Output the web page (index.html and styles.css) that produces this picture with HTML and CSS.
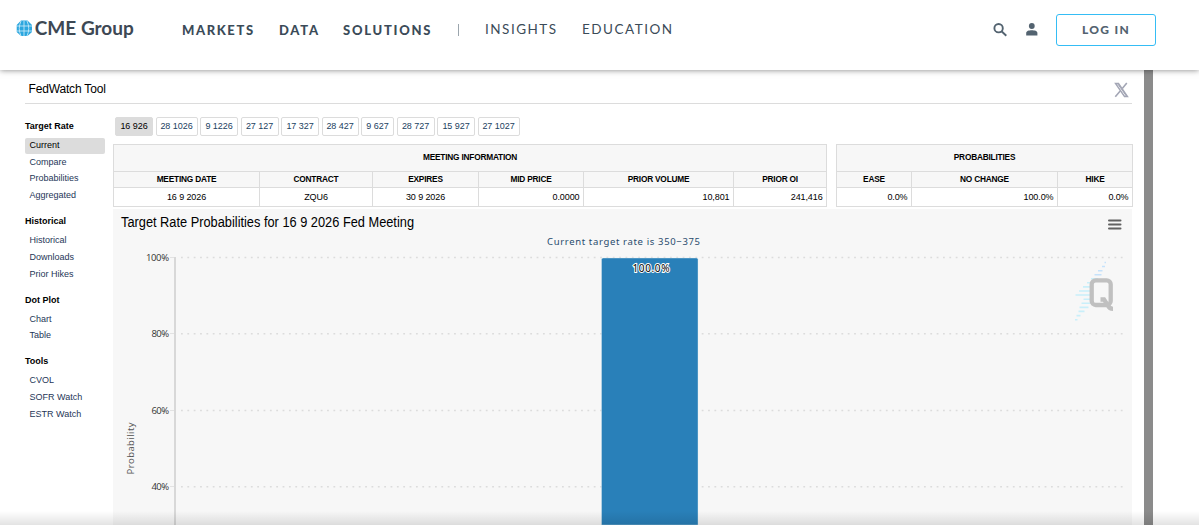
FILE: index.html
```html
<!DOCTYPE html>
<html lang="en">
<head>
<meta charset="utf-8">
<title>FedWatch Tool - CME Group</title>
<link rel="stylesheet" href="styles.css">
</head>
<body>
<div class="page">
<header class="header">
  <a class="logo" aria-label="CME Group">
    <svg width="126" height="40" viewBox="0 -8 126 40">
      <path fill="#2ca7df" d="M5 .5h6.500L16 5v7l-4.500 4H5L.7 12V5z"/>
      <g fill="none" stroke="#d4effa" stroke-width=".8"><path d="M8 1v15M0 6h16M0 11h16M5 1Q1.500 8.500 5 16M11 1q3.500 7.500 0 15"/></g>
      <text class="logo-text" x="18.800" y="15" textLength="99" lengthAdjust="spacingAndGlyphs">CME Group</text>
    </svg>
  </a>
  <nav class="nav">
    <a class="nav-main markets">MARKETS</a>
    <a class="nav-main data">DATA</a>
    <a class="nav-main solutions">SOLUTIONS</a>
    <span class="nav-divider"></span>
    <a class="nav-sub insights">INSIGHTS</a>
    <a class="nav-sub">EDUCATION</a>
  </nav>
  <div class="actions">
    <svg class="search" width="14" height="14" viewBox="0 0 14 14" fill="none" stroke="#536370" stroke-width="1.900"><circle cx="5.600" cy="5.200" r="4.200"/><path d="M8.500 8.200 13.300 12.800"/></svg>
    <svg class="user" width="12" height="13" viewBox="0 0 12 13" fill="#536370"><circle cx="5.800" cy="3" r="2.900"/><path d="M.2 12.500V10C.2 8 3 7.300 5.800 7.300S11.400 8 11.400 10v2.500z"/></svg>
    <a class="login">LOG IN</a>
  </div>
</header>
<div class="viewport">
  <main class="tool">
    <div class="tool-head">
      <h1>FedWatch Tool</h1>
      <svg width="15" height="16" viewBox="0 0 15 16" fill="none" stroke="#a3a6b5"><path stroke-width="1.400" d="M1.500 1.500h3l9 13h-3z"/><path stroke-width="1" d="m3.800 2 8.500 12"/><path stroke-width="1.600" d="M12.800 1 8.300 6.500M6.200 9 1.300 14.800"/></svg>
    </div>
    <div class="columns">
      <aside class="sidebar">
        <h2>Target Rate</h2>
        <a class="active">Current</a><a>Compare</a><a>Probabilities</a><a>Aggregated</a>
        <h2>Historical</h2>
        <a>Historical</a><a>Downloads</a><a>Prior Hikes</a>
        <h2 class="tight">Dot Plot</h2>
        <a>Chart</a><a>Table</a>
        <h2 class="tight">Tools</h2>
        <a>CVOL</a><a>SOFR Watch</a><a>ESTR Watch</a>
      </aside>
      <section class="content">
        <div class="tabs">
          <a class="selected">16 926</a><a class="wide">28 1026</a><a>9 1226</a><a>27 127</a><a>17 327</a><a class="mid">28 427</a><a class="short">9 627</a><a>28 727</a><a>15 927</a><a class="wide">27 1027</a>
        </div>
        <div class="tables">
          <table class="meeting">
            <colgroup><col class="c146"><col class="c113"><col class="c106"><col class="c105"><col class="c150"><col class="c93"></colgroup>
            <tr class="caption"><th colspan="6">MEETING INFORMATION</th></tr>
            <tr class="labels"><th>MEETING DATE</th><th>CONTRACT</th><th>EXPIRES</th><th>MID PRICE</th><th>PRIOR VOLUME</th><th>PRIOR OI</th></tr>
            <tr class="values"><td class="center">16 9 2026</td><td class="center">ZQU6</td><td class="center">30 9 2026</td><td>0.0000</td><td>10,801</td><td>241,416</td></tr>
          </table>
          <table class="probabilities">
            <colgroup><col class="c75"><col class="c146"><col class="c75"></colgroup>
            <tr class="caption"><th colspan="3">PROBABILITIES</th></tr>
            <tr class="labels"><th>EASE</th><th>NO CHANGE</th><th>HIKE</th></tr>
            <tr class="values"><td>0.0%</td><td>100.0%</td><td>0.0%</td></tr>
          </table>
        </div>
        <svg class="chart" width="1019" height="316" viewBox="113 209 1019 316">
          <rect x="113" y="209" width="1019" height="316" fill="#f7f7f7"/>
          <text class="chart-title" x="121" y="227" textLength="293" lengthAdjust="spacingAndGlyphs">Target Rate Probabilities for 16 9 2026 Fed Meeting</text>
          <text class="chart-subtitle" x="547" y="245" textLength="153">Current target rate is 350−375</text>
          <path stroke="#616161" stroke-width="2" stroke-linecap="round" d="M1109 220.500h11.500M1109 224.500h11.500M1109 228.500h11.500"/>
          <g stroke="#dcdcdc" stroke-width="1.500" stroke-dasharray="1.800 4.550">
            <path d="M181 257.500h944M181 333.700h944M181 410.400h944M181 486.700h944"/>
          </g>
          <path stroke="#e2e2e2" d="M170 257.500h5M170 333.500h5M170 410.500h5M170 486.500h5"/>
          <path stroke="#d8d8d8" stroke-width="2" d="M175 257v268"/>
          <g class="axis-label">
            <text x="146" y="261" textLength="23">100%</text>
            <text x="151.500" y="337" textLength="17.500">80%</text>
            <text x="151.500" y="414" textLength="17.500">60%</text>
            <text x="151.500" y="490" textLength="17.500">40%</text>
          </g>
          <text class="axis-title" transform="translate(134 474.500) rotate(-90)" textLength="52">Probability</text>
          <path fill="#2980b9" stroke="#e5eff6" stroke-width=".4" d="M601.500 525V259.500q0-1.500 1.500-1.500h93.500q1.500 0 1.500 1.500V525z"/>
          <text class="bar-label" x="632.500" y="272" textLength="37">100.0%</text>
          <g stroke="#c9effa" stroke-width="1.600">
            <path stroke="#c5e2fb" d="M1104.500 262.500h1.500M1102 266.500h3M1098 270.700h4.500M1094.500 274.800h7"/>
            <path d="M1091 278.800h7M1087 282.800h5M1083 286.900h8M1079 291h12M1075.500 295h15M1083.500 299.200h7M1081.500 303.200h9M1079.500 307.400h9M1078.500 311.400h6M1076.500 315.600h4M1075 319.700h2.500"/>
          </g>
          <g fill="none" stroke="#c0c0c0" stroke-width="4.300"><rect x="1091.700" y="280.300" width="19" height="24.700" rx="4"/><path d="M1100.500 299.500h3.500l4 6q1.500 3.300 5 3.300"/></g>
        </svg>
      </section>
    </div>
  </main>
  <div class="scrollbar"></div>
</div>
<div class="fade"></div>
</div>
</body>
</html>
```
FILE: styles.css
```css
* { box-sizing: border-box; }
html { overflow: hidden; }
body { margin: 0; background: #fff; font-family: "Liberation Sans", Arial, sans-serif; }
.page { position: relative; height: 525px; overflow: hidden; }

.header { position: relative; z-index: 2; height: 70px; display: flex; align-items: flex-start; padding-left: 16px; background: #fff; box-shadow: 0 0 6px rgba(0, 0, 0, .5); font-family: Lato, sans-serif; color: #3b4b58; }
.logo { height: 40px; width: 126px; margin-top: 12px; }
.logo-text { font: 700 18.500px Lato, sans-serif; fill: #3d4854; }
.nav { display: flex; margin: 20px 0 0 40px; height: 20px; line-height: 20px; white-space: nowrap; }
.nav-main { font-weight: 900; font-size: 13px; letter-spacing: 1.750px; }
.nav-sub { font-size: 13.500px; letter-spacing: 1.500px; line-height: 18px; }
.markets { width: 97px; letter-spacing: 1.600px; }
.data { width: 64px; }
.solutions { width: 115px; }
.nav-divider { width: 1px; height: 12px; margin: 4px 26px 0 0; background: #9ba5ad; }
.insights { width: 97px; }
.actions { display: flex; margin: 14px 43px 0 auto; }
.search { margin: 9px 19px 0 0; }
.user { margin: 9px 18px 0 0; }
.login { width: 100px; height: 32px; border: 1px solid #35bdf5; border-radius: 3px; text-align: center; font-size: 12px; font-weight: 900; line-height: 29px; letter-spacing: 1.300px; color: #536370; }

.viewport { display: flex; height: 455px; }
.tool { width: 1107px; margin-left: 25px; }
.scrollbar { width: 9px; margin-left: 12px; background: #8b8b8b; }
.tool-head { display: flex; justify-content: space-between; height: 34px; padding: 12px 3px 0 3.500px; border-bottom: 1px solid #dcdcdc; }
.tool-head h1 { margin: 0; font-size: 12px; font-weight: 400; line-height: 14px; letter-spacing: -.17px; }
.columns { display: flex; }

.sidebar { display: flex; flex: none; flex-direction: column; width: 80px; margin-right: 8px; padding-top: 17px; font-size: 9px; }
.sidebar h2 { height: 17.600px; margin: 10.500px 0 0; font-size: 9px; line-height: 11px; }
.sidebar h2:first-child { height: 17px; margin-top: 0; }
.sidebar .tight { height: 17px; }
.sidebar a { height: 16.900px; padding-left: 4.500px; line-height: 15px; color: #253657; }
.sidebar .active { height: 16px; margin-bottom: .6px; border-radius: 2px; background: #dcdcdc; color: #000; line-height: 14px; }

.content { flex: none; width: 1019px; }
.tabs { display: flex; gap: 2.500px; padding: 13px 0 0 2px; height: 40px; font-size: 9px; }
.tabs a { width: 38px; height: 19px; border: 1px solid #dcdcdc; border-radius: 2px; line-height: 16px; text-align: center; white-space: nowrap; color: #1a4161; letter-spacing: -.05px; }
.tabs .selected { background: #dcdcdc; color: #000; }
.tabs .wide { width: 42px; }
.tabs .mid { width: 37px; }
.tabs .short { width: 33px; }
.tables { display: flex; justify-content: space-between; width: 1020px; height: 65px; }
table { border-collapse: collapse; table-layout: fixed; height: 63px; }
.meeting { width: 714px; }
.probabilities { width: 297px; }
.c146 { width: 146px; } .c113 { width: 113px; } .c106 { width: 106px; } .c105 { width: 105px; } .c150 { width: 150px; } .c93 { width: 93px; } .c75 { width: 75px; }
th, td { padding: 0; border: 1px solid #dcdcdc; }
th { background: #f7f7f7; font-size: 8.300px; letter-spacing: -.2px; }
td { padding-right: 3.500px; text-align: right; font-size: 9px; letter-spacing: -.1px; }
td.center { text-align: center; padding: 0; }
.caption { height: 27px; line-height: 23px; }
.caption th { padding-bottom: 2px; }
.labels { height: 16px; line-height: 12px; }
.labels th { padding-bottom: 2px; }
.values { height: 19px; line-height: 18px; }

.chart { display: block; }
.chart-title { font: 13.800px "Liberation Sans", Arial, sans-serif; }
.chart-subtitle { font: 9.500px "Noto Sans", sans-serif; fill: #274b6d; }
.axis-label { font: 9.500px "Open Sans", sans-serif; fill: #333; }
.axis-title { font: 9.500px "Open Sans", sans-serif; fill: #555; }
.bar-label { font: 10px "Noto Sans", sans-serif; fill: #000; stroke: #fff; stroke-width: 2px; paint-order: stroke; }
.fade { position: absolute; z-index: 3; left: 0; right: 0; bottom: 0; height: 14px; background: linear-gradient(transparent, rgba(0, 0, 0, .11)); }
```
